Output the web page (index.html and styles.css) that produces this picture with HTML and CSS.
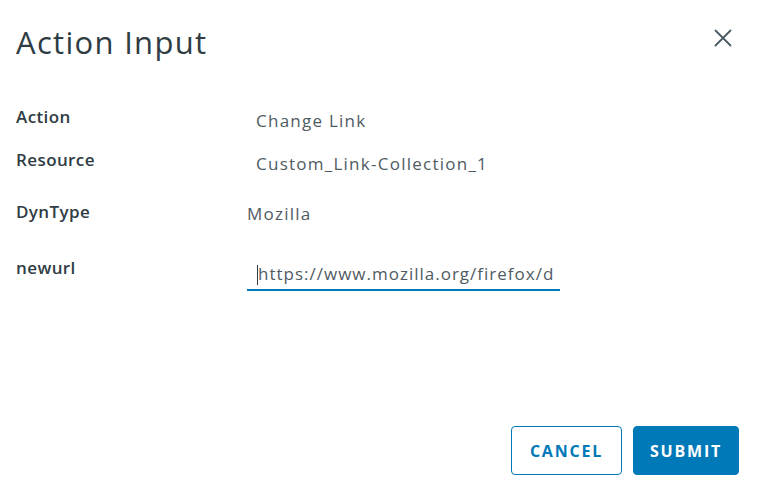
FILE: index.html
```html
<!DOCTYPE html>
<html lang="en">

<head>
    <meta charset="UTF-8">
    <title>Action Input</title>
    <link rel="stylesheet" href="styles.css">
</head>

<body>
    <div class="modal">
        <div class="header">
            <h1 class="title">Action Input</h1>
            <button class="close" aria-label="Close">
                <svg width="18" height="18" viewBox="0 0 18 18">
                    <path d="M1.5 1.5 L16.5 16.5 M16.5 1.5 L1.5 16.5" stroke="#4a5a63" stroke-width="1.8" stroke-linecap="round" />
                </svg>
            </button>
        </div>

        <div class="body">
            <div class="row row-action">
                <label>Action</label>
                <span class="value indent">Change Link</span>
            </div>
            <div class="row row-resource">
                <label>Resource</label>
                <span class="value indent">Custom_Link-Collection_1</span>
            </div>
            <div class="row row-dyn">
                <label>DynType</label>
                <span class="value">Mozilla</span>
            </div>
            <div class="row row-url">
                <label>newurl</label>
                <div class="field">
                    <span class="caret"></span>
                    <input type="text" value="https://www.mozilla.org/firefox/download/thanks/">
                </div>
            </div>
        </div>

        <div class="footer">
            <button class="btn btn-outline">Cancel</button>
            <button class="btn btn-primary">Submit</button>
        </div>
    </div>
</body>

</html>
```

FILE: styles.css
```css
body {
    margin: 0;
    background: #fff;
    font-family: 'Open Sans', 'Noto Sans', sans-serif;
    color: #2f3c44;
}

.modal {
    height: 496px;
    display: flex;
    flex-direction: column;
    box-sizing: border-box;
    padding: 0 20px 21px 16px;
}

.header {
    display: flex;
    justify-content: space-between;
    align-items: flex-start;
    padding-top: 23px;
}

.title {
    margin: 0;
    font-size: 31px;
    font-weight: 400;
    line-height: 38px;
    letter-spacing: 1.3px;
    color: #2f3c44;
}

.close {
    border: none;
    background: none;
    padding: 0;
    margin: 6px 7px 0 0;
    width: 18px;
    height: 18px;
    cursor: pointer;
}

.body {
    flex: 1;
    padding-top: 46px;
}

.row {
    display: flex;
    align-items: flex-start;
}

.row label {
    width: 231px;
    font-size: 17px;
    font-weight: 600;
    line-height: 20px;
    letter-spacing: 0.4px;
    color: #2f3c44;
}

.value {
    font-size: 17px;
    line-height: 20px;
    letter-spacing: 1.25px;
    color: #4f5b63;
}

.indent {
    padding-left: 9px;
    padding-top: 4px;
}

.row-resource {
    margin-top: 19px;
}

.row-dyn {
    margin-top: 28px;
}

.row-dyn .value {
    padding-top: 2px;
}

.row-url {
    margin-top: 34px;
}

.field {
    position: relative;
    width: 313px;
    border-bottom: 2px solid #0079b8;
}

.field input {
    display: block;
    width: 100%;
    box-sizing: border-box;
    border: none;
    outline: none;
    padding: 6px 6px 5px 11px;
    font-family: inherit;
    font-size: 17px;
    line-height: 20px;
    letter-spacing: 1px;
    color: #4f5b63;
    background: transparent;
}

.caret {
    position: absolute;
    left: 10px;
    top: 7px;
    width: 1px;
    height: 20px;
    background: #2f3c44;
}

.footer {
    display: flex;
    justify-content: flex-end;
    gap: 11px;
}

.btn {
    height: 49px;
    border-radius: 4px;
    font-family: inherit;
    font-size: 16px;
    font-weight: 700;
    letter-spacing: 1.8px;
    text-transform: uppercase;
    cursor: pointer;
    box-sizing: border-box;
}

.btn-outline {
    width: 111px;
    background: #fff;
    color: #0079b8;
    border: 1px solid #0079b8;
}

.btn-primary {
    width: 106px;
    background: #0079b8;
    color: #fff;
    border: 1px solid #0079b8;
}
```
